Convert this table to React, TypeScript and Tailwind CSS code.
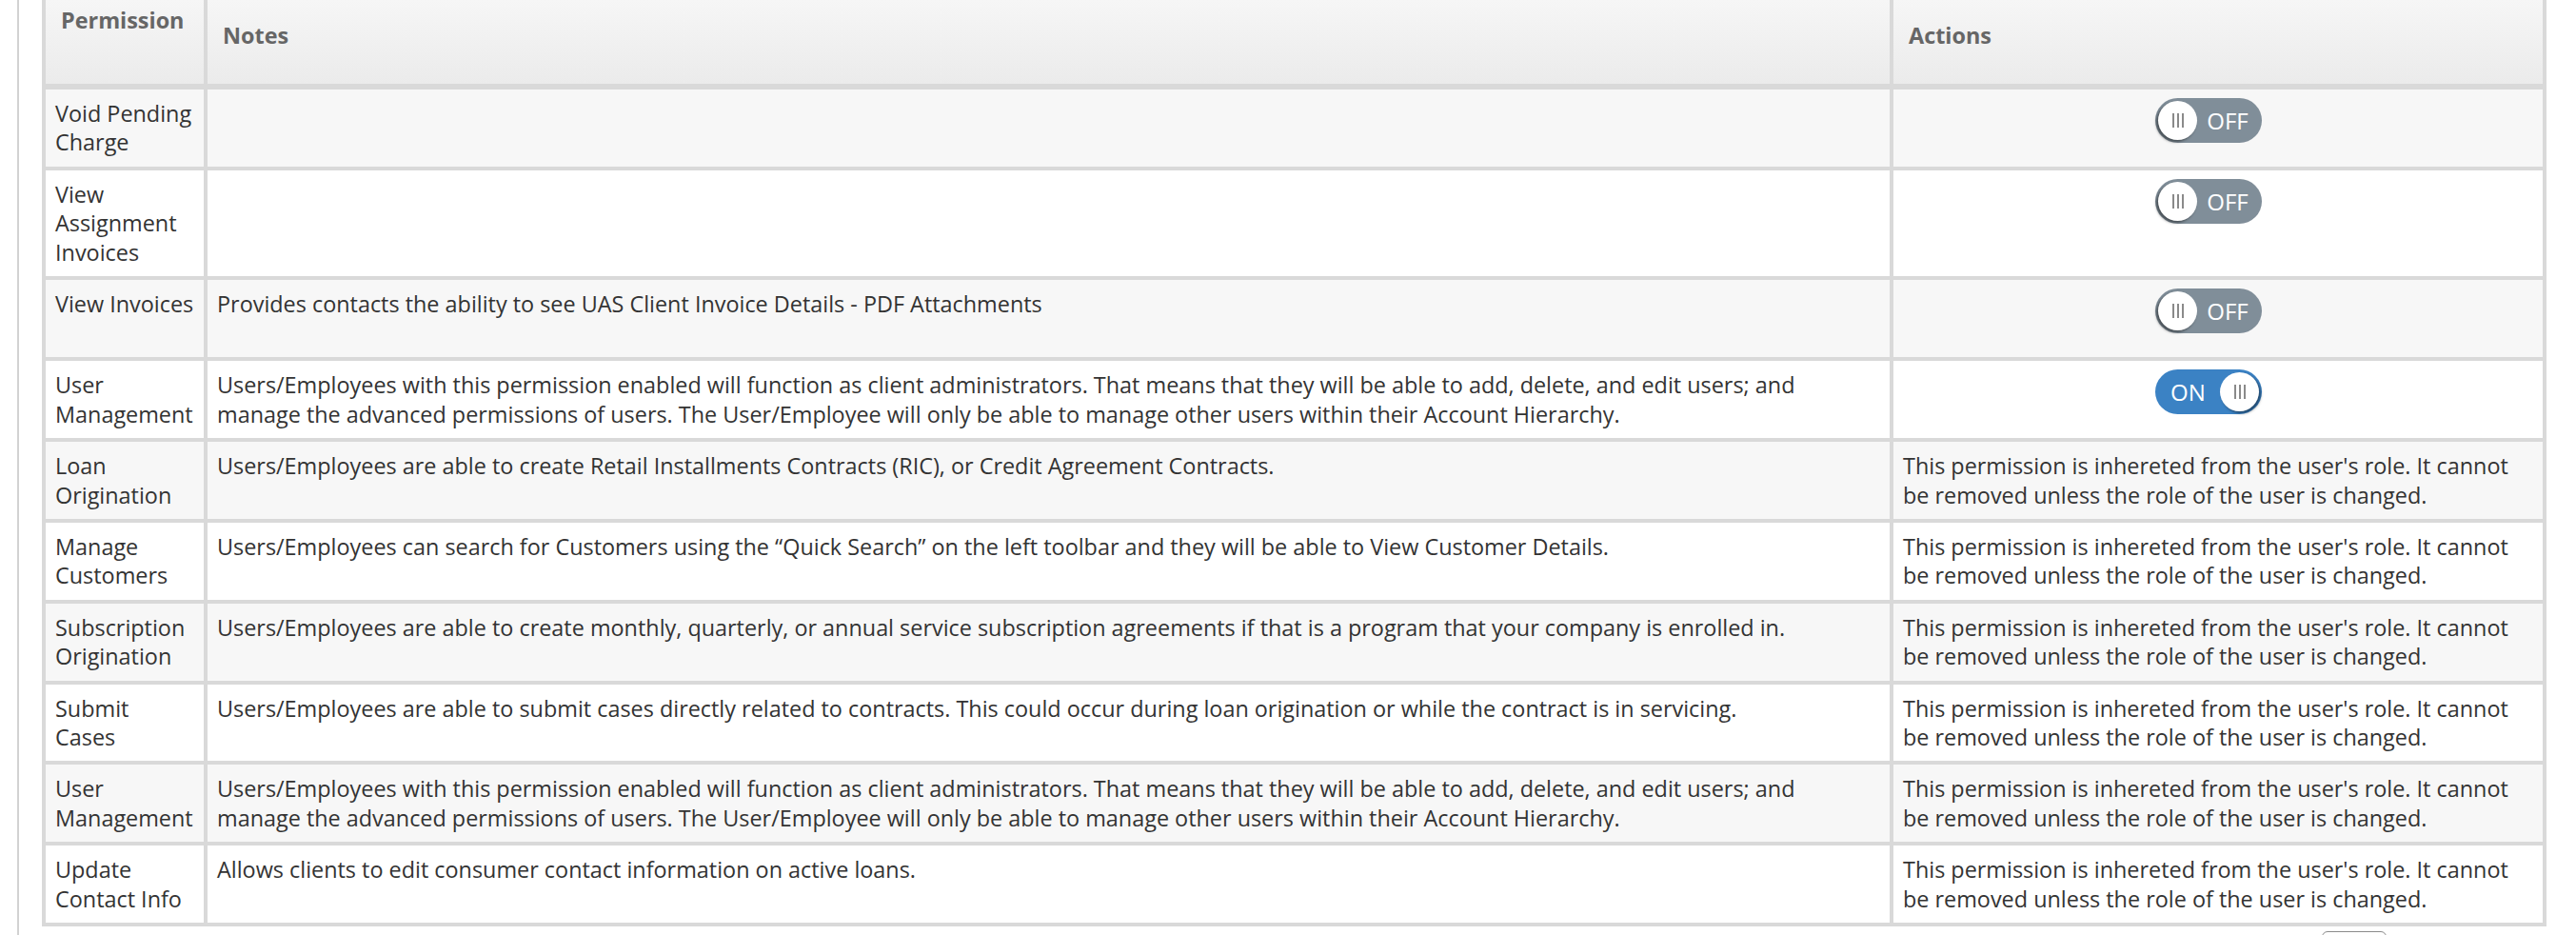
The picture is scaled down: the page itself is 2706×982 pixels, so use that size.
import React from "react";

type Row = {
  name: string[];
  notes: string[];
  action: "off" | "on" | "inherit";
};

const rows: Row[] = [
  { name: ["Void Pending", "Charge"], notes: [], action: "off" },
  { name: ["View", "Assignment", "Invoices"], notes: [], action: "off" },
  {
    name: ["View Invoices"],
    notes: ["Provides contacts the ability to see UAS Client Invoice Details - PDF Attachments"],
    action: "off",
  },
  {
    name: ["User", "Management"],
    notes: [
      "Users/Employees with this permission enabled will function as client administrators. That means that they will be able to add, delete, and edit users; and",
      "manage the advanced permissions of users. The User/Employee will only be able to manage other users within their Account Hierarchy.",
    ],
    action: "on",
  },
  {
    name: ["Loan", "Origination"],
    notes: ["Users/Employees are able to create Retail Installments Contracts (RIC), or Credit Agreement Contracts."],
    action: "inherit",
  },
  {
    name: ["Manage", "Customers"],
    notes: [
      "Users/Employees can search for Customers using the \u201CQuick Search\u201D on the left toolbar and they will be able to View Customer Details.",
    ],
    action: "inherit",
  },
  {
    name: ["Subscription", "Origination"],
    notes: [
      "Users/Employees are able to create monthly, quarterly, or annual service subscription agreements if that is a program that your company is enrolled in.",
    ],
    action: "inherit",
  },
  {
    name: ["Submit", "Cases"],
    notes: [
      "Users/Employees are able to submit cases directly related to contracts. This could occur during loan origination or while the contract is in servicing.",
    ],
    action: "inherit",
  },
  {
    name: ["User", "Management"],
    notes: [
      "Users/Employees with this permission enabled will function as client administrators. That means that they will be able to add, delete, and edit users; and",
      "manage the advanced permissions of users. The User/Employee will only be able to manage other users within their Account Hierarchy.",
    ],
    action: "inherit",
  },
  {
    name: ["Update", "Contact Info"],
    notes: ["Allows clients to edit consumer contact information on active loans."],
    action: "inherit",
  },
];

function Grip() {
  return (
    <div className="flex gap-[3px]">
      <span className="block w-[2px] h-[15px] bg-[#8a8a8a]" />
      <span className="block w-[2px] h-[15px] bg-[#8a8a8a]" />
      <span className="block w-[2px] h-[15px] bg-[#8a8a8a]" />
    </div>
  );
}

function Toggle({ on }: { on: boolean }) {
  if (on) {
    return (
      <div className="flex items-center w-[112px] h-[47px] rounded-full bg-[#3b82c4] pl-[16px] pr-[3px]">
        <span className="text-white text-[24px] leading-none flex-1">ON</span>
        <div className="w-[41px] h-[41px] rounded-full bg-white flex items-center justify-center shadow-[2px_2px_3px_rgba(0,0,0,0.45)]">
          <Grip />
        </div>
      </div>
    );
  }
  return (
    <div className="flex items-center w-[112px] h-[47px] rounded-full bg-[#808e99] pl-[3px] pr-[8px]">
      <div className="w-[41px] h-[41px] rounded-full bg-white flex items-center justify-center shadow-[-2px_2px_3px_rgba(0,0,0,0.45)]">
        <Grip />
      </div>
      <span className="text-white text-[24px] leading-none flex-1 text-center pl-[4px]">OFF</span>
    </div>
  );
}

export default function App() {
  return (
    <div
      className="min-h-screen bg-white text-[#333333]"
      style={{ fontFamily: '"Open Sans", "Liberation Sans", sans-serif' }}
    >
      <div className="ml-[18px] min-h-[982px] border-l-2 border-[#d2d2d2] pl-[24px]">
        <div className="w-[2631px] grid grid-cols-[166px_1767px_682px] gap-[4px] bg-[#d9d9d9] px-[4px] pb-[4px]">
          {/* header */}
          <div className="h-[90px] border-b-2 border-[#d9d9d9] bg-gradient-to-b from-[#f6f6f6] to-[#ebebeb] pl-[16px] pt-[6px] text-[23.4px] leading-[31px] font-bold text-[#666666]">
            Permission
          </div>
          <div className="h-[90px] border-b-2 border-[#d9d9d9] bg-gradient-to-b from-[#f6f6f6] to-[#ebebeb] pl-[16px] pt-[22px] text-[23.4px] leading-[31px] font-bold text-[#666666]">
            Notes
          </div>
          <div className="h-[90px] border-b-2 border-[#d9d9d9] bg-gradient-to-b from-[#f6f6f6] to-[#ebebeb] pl-[16px] pt-[22px] text-[23.4px] leading-[31px] font-bold text-[#666666]">
            Actions
          </div>

          {rows.map((r, i) => {
            const bg = i % 2 === 0 ? "bg-[#f7f7f7]" : "bg-white";
            return (
              <React.Fragment key={i}>
                <div className={`${bg} px-[10px] py-[10px] text-[23.4px] leading-[30.4px]`}>
                  {r.name.map((l, j) => (
                    <div key={j} className="whitespace-nowrap">
                      {l}
                    </div>
                  ))}
                </div>
                <div className={`${bg} px-[10px] py-[10px] text-[23.4px] leading-[30.4px]`}>
                  {r.notes.map((l, j) => (
                    <div key={j} className="whitespace-nowrap">
                      {l}
                    </div>
                  ))}
                </div>
                <div className={`${bg} px-[10px] py-[10px] text-[23.4px] leading-[30.4px]`}>
                  {r.action === "inherit" ? (
                    <>
                      <div className="whitespace-nowrap">This permission is inhereted from the user's role. It cannot</div>
                      <div className="whitespace-nowrap">be removed unless the role of the user is changed.</div>
                    </>
                  ) : (
                    <div className="min-h-[62px] flex justify-center pr-[20px] -mt-[1px]">
                      <Toggle on={r.action === "on"} />
                    </div>
                  )}
                </div>
              </React.Fragment>
            );
          })}
        </div>
        <div className="w-[2631px] flex justify-end pr-[168px] pt-[5px]">
          <div className="w-[68px] h-[40px] rounded-[6px] border border-[#8c8c8c] bg-white" />
        </div>
      </div>
    </div>
  );
}
